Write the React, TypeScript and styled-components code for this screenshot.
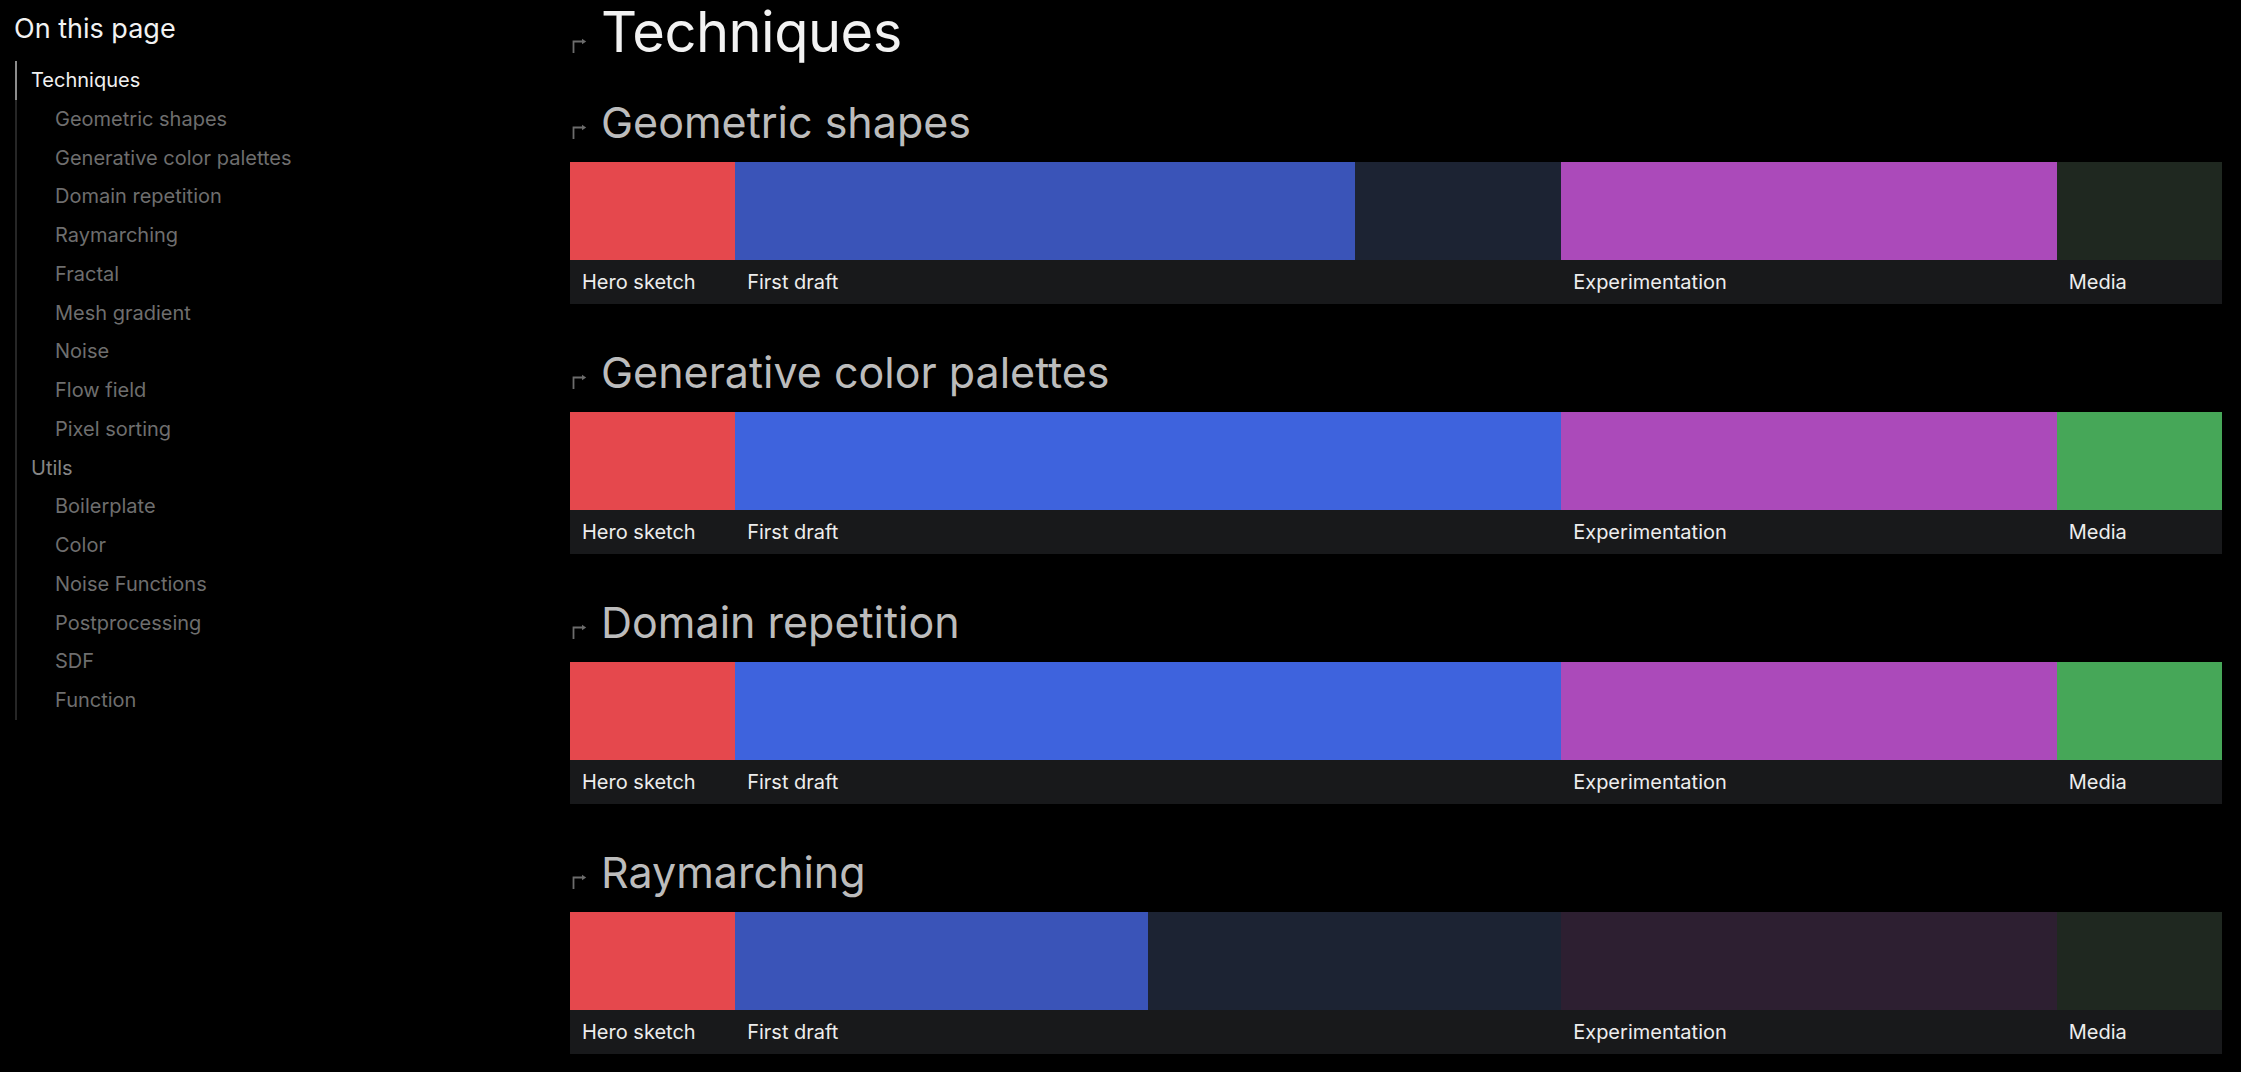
import { createGlobalStyle } from 'styled-components';
import styled from 'styled-components';

type TSegment = {
  label: string;
  weight: number;
  fill: string;
  track: string;
  progress: number;
};

type TSection = {
  title: string;
  segments: TSegment[];
};

const RED = '#e5484d';
const BLUE_DONE = '#3e63dd';
const BLUE_WIP = '#3a54b8';
const BLUE_TRACK = '#1c2333';
const PURPLE = '#ab4aba';
const PURPLE_TRACK = '#2d1f31';
const GREEN = '#46a758';
const GREEN_TRACK = '#1f2820';

const stages = (first: [number, string], exp: number, media: number): TSegment[] => [
  { label: 'Hero sketch', weight: 10, fill: RED, track: '#3b1719', progress: 100 },
  { label: 'First draft', weight: 50, fill: first[1], track: BLUE_TRACK, progress: first[0] },
  { label: 'Experimentation', weight: 30, fill: PURPLE, track: PURPLE_TRACK, progress: exp },
  { label: 'Media', weight: 10, fill: GREEN, track: GREEN_TRACK, progress: media },
];

const sections: TSection[] = [
  { title: 'Geometric shapes', segments: stages([75, BLUE_WIP], 100, 0) },
  { title: 'Generative color palettes', segments: stages([100, BLUE_DONE], 100, 100) },
  { title: 'Domain repetition', segments: stages([100, BLUE_DONE], 100, 100) },
  { title: 'Raymarching', segments: stages([50, BLUE_WIP], 0, 0) },
];

const toc = [
  { label: 'Techniques', depth: 0, active: true },
  { label: 'Geometric shapes', depth: 1 },
  { label: 'Generative color palettes', depth: 1 },
  { label: 'Domain repetition', depth: 1 },
  { label: 'Raymarching', depth: 1 },
  { label: 'Fractal', depth: 1 },
  { label: 'Mesh gradient', depth: 1 },
  { label: 'Noise', depth: 1 },
  { label: 'Flow field', depth: 1 },
  { label: 'Pixel sorting', depth: 1 },
  { label: 'Utils', depth: 0 },
  { label: 'Boilerplate', depth: 1 },
  { label: 'Color', depth: 1 },
  { label: 'Noise Functions', depth: 1 },
  { label: 'Postprocessing', depth: 1 },
  { label: 'SDF', depth: 1 },
  { label: 'Function', depth: 1 },
];

const GlobalStyle = createGlobalStyle`
  html, body {
    margin: 0;
    background: #000;
    color: #ededed;
    font-family: Inter, "Noto Sans", sans-serif;
    -webkit-font-smoothing: antialiased;
  }
  * { box-sizing: border-box; }
`;

const AnchorIcon = () => (
  <svg width="15" height="15" viewBox="0 0 15 15" fill="none">
    <path d="M1.5 15V3.5H11" stroke="currentColor" strokeWidth="1.8" />
    <path d="M10 0.8L14.2 3.5L10 6.2Z" fill="currentColor" />
  </svg>
);

const App = () => {
  return (
    <>
      <GlobalStyle />
      <Page>
        <Sidebar>
          <SidebarTitle>On this page</SidebarTitle>
          <TocList>
            {toc.map((item) => (
              <TocItem key={item.label} $depth={item.depth} $active={!!item.active}>
                {item.label}
              </TocItem>
            ))}
          </TocList>
        </Sidebar>
        <Main>
          <PageTitle>
            <Anchor><AnchorIcon /></Anchor>
            Techniques
          </PageTitle>
          {sections.map((section) => (
            <Section key={section.title}>
              <SectionTitle>
                <Anchor><AnchorIcon /></Anchor>
                {section.title}
              </SectionTitle>
              <Timeline>
                <Bars>
                  {section.segments.map((seg) => (
                    <Track key={seg.label} $weight={seg.weight} $color={seg.track}>
                      <Fill $color={seg.fill} style={{ width: `${seg.progress}%` }} />
                    </Track>
                  ))}
                </Bars>
                <Labels>
                  {section.segments.map((seg) => (
                    <Label key={seg.label} $weight={seg.weight}>{seg.label}</Label>
                  ))}
                </Labels>
              </Timeline>
            </Section>
          ))}
        </Main>
      </Page>
    </>
  );
};

const Page = styled.div`
  display: grid;
  grid-template-columns: 555px 1fr;
  padding: 0 19px 0 15px;
  min-height: 1072px;
`;

const Sidebar = styled.aside`
  display: flex;
  flex-direction: column;
`;

const SidebarTitle = styled.h3`
  margin: 11px 0 0 -1px;
  font-size: 27px;
  line-height: 36px;
  font-weight: 400;
  color: #f2f2f2;
`;

const TocList = styled.ul`
  list-style: none;
  margin: 14px 0 0;
  padding: 0;
  border-left: 2px solid #262626;
`;

const TocItem = styled.li<{ $depth: number; $active: boolean }>`
  position: relative;
  padding-left: ${({ $depth }) => ($depth ? 38 : 14)}px;
  height: 38.75px;
  line-height: 38.75px;
  font-size: 20px;
  color: ${({ $active, $depth }) => ($active ? '#f0f0f0' : $depth ? '#6e6e6e' : '#858585')};

  &::before {
    content: '';
    display: ${({ $active }) => ($active ? 'block' : 'none')};
    position: absolute;
    left: -2px;
    top: 0;
    bottom: 0;
    width: 2px;
    background: #8c8c8c;
  }
`;

const Main = styled.main`
  display: flex;
  flex-direction: column;
`;

const Anchor = styled.span`
  display: inline-flex;
  color: #6c6c6c;
  margin: 0 14px 0 2px;
`;

const PageTitle = styled.h1`
  display: flex;
  align-items: flex-end;
  margin: 0;
  font-size: 56px;
  line-height: 64px;
  font-weight: 400;
  color: #f2f2f2;
  letter-spacing: -0.5px;

  ${Anchor} {
    transform: translateY(-11px);
  }
`;

const Section = styled.section`
  display: flex;
  flex-direction: column;
  margin-top: 33px;

  & + & {
    margin-top: 43px;
  }
`;

const SectionTitle = styled.h2`
  display: flex;
  align-items: flex-end;
  margin: 0 0 15px;
  font-size: 43px;
  line-height: 50px;
  font-weight: 400;
  color: #bcbcbc;

  ${Anchor} {
    transform: translateY(-8px);
  }
`;

const Timeline = styled.div`
  display: flex;
  flex-direction: column;
`;

const Bars = styled.div`
  display: flex;
  height: 98px;
`;

const Track = styled.div<{ $weight: number; $color: string }>`
  flex: 0 0 ${({ $weight }) => $weight}%;
  background: ${({ $color }) => $color};
  display: flex;
`;

const Fill = styled.div<{ $color: string }>`
  height: 100%;
  background: ${({ $color }) => $color};
`;

const Labels = styled.div`
  display: flex;
  height: 44px;
  background: #18191b;
`;

const Label = styled.div<{ $weight: number }>`
  flex: 0 0 ${({ $weight }) => $weight}%;
  display: flex;
  align-items: center;
  padding-left: 12px;
  font-size: 20px;
  color: #ededed;
  white-space: nowrap;
`;

export default App;
